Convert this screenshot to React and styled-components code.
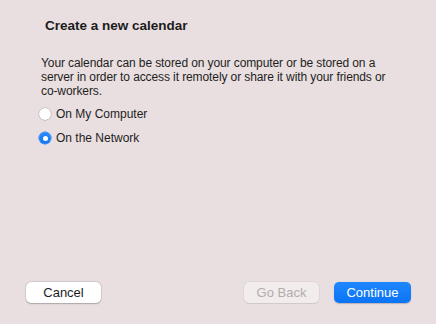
import React, { useState } from "react";
import styled, { createGlobalStyle } from "styled-components";

const Global = createGlobalStyle`
  html, body { margin: 0; padding: 0; background: #e9dfe0; }
  body { font-family: "Liberation Sans", Arial, sans-serif; -webkit-font-smoothing: antialiased; }
`;

const Window = styled.div`
  width: 436px;
  height: 324px;
  box-sizing: border-box;
  background: #e9dfe0;
  display: flex;
  flex-direction: column;
  padding: 0 25px 21px 26px;
`;

const Title = styled.h1`
  margin: 0;
  padding: 18px 0 0 19px;
  font-size: 13.5px;
  line-height: 16px;
  font-weight: 700;
  color: #1c1c1c;
`;

const Body = styled.div`
  padding: 22px 15px 0 15px;
  flex: 1;
`;

const Description = styled.p`
  margin: 0;
  font-size: 12px;
  line-height: 14px;
  letter-spacing: -0.1px;
  color: #1e1e1e;
`;

const RadioList = styled.div`
  display: flex;
  flex-direction: column;
  gap: 10px;
  margin-top: 9px;
  margin-left: -2px;
`;

const RadioRow = styled.label`
  display: flex;
  align-items: center;
  gap: 5px;
  font-size: 12px;
  line-height: 14px;
  color: #1e1e1e;
  cursor: default;
`;

const RadioDot = styled.span`
  width: 12px;
  height: 12px;
  border-radius: 50%;
  box-sizing: border-box;
  flex: none;
  display: flex;
  align-items: center;
  justify-content: center;
  background: ${(p) => (p.$on ? "linear-gradient(#2d8cfc, #0f76f4)" : "#ffffff")};
  box-shadow: ${(p) =>
    p.$on ? "0 0 0 0.5px #1a74e6" : "0 0 0 0.5px rgba(0,0,0,0.22), 0 0.5px 1px rgba(0,0,0,0.12)"};
  &::after {
    content: "";
    display: ${(p) => (p.$on ? "block" : "none")};
    width: 5px;
    height: 5px;
    border-radius: 50%;
    background: #ffffff;
  }
`;

const Footer = styled.div`
  display: flex;
  align-items: center;
  gap: 15px;
`;

const Spacer = styled.div`
  flex: 1;
`;

const Button = styled.button`
  width: ${(p) => p.$w}px;
  height: 21px;
  border: none;
  border-radius: 5px;
  font-family: inherit;
  font-size: 13px;
  padding: 0;
  background: ${(p) =>
    p.$primary ? "linear-gradient(#1f87fd, #0a74f6)" : p.$disabled ? "#f2ecec" : "#ffffff"};
  color: ${(p) => (p.$primary ? "#ffffff" : p.$disabled ? "#b3adae" : "#1c1c1c")};
  box-shadow: ${(p) =>
    p.$primary
      ? "0 0.5px 1px rgba(0,0,0,0.2)"
      : p.$disabled
      ? "0 0 0 0.5px rgba(0,0,0,0.06), 0 0.5px 1px rgba(0,0,0,0.08)"
      : "0 0 0 0.5px rgba(0,0,0,0.12), 0 0.5px 1.5px rgba(0,0,0,0.22)"};
`;

export default function App() {
  const [choice, setChoice] = useState("network");
  return (
    <>
      <Global />
      <Window>
        <Title>Create a new calendar</Title>
        <Body>
          <Description>
            Your calendar can be stored on your computer or be stored on a server in order to
            access it remotely or share it with your friends or co-workers.
          </Description>
          <RadioList>
            <RadioRow onClick={() => setChoice("local")}>
              <RadioDot $on={choice === "local"} />
              On My Computer
            </RadioRow>
            <RadioRow onClick={() => setChoice("network")}>
              <RadioDot $on={choice === "network"} />
              On the Network
            </RadioRow>
          </RadioList>
        </Body>
        <Footer>
          <Button $w={75}>Cancel</Button>
          <Spacer />
          <Button $w={75} $disabled>Go Back</Button>
          <Button $w={77} $primary>Continue</Button>
        </Footer>
      </Window>
    </>
  );
}
